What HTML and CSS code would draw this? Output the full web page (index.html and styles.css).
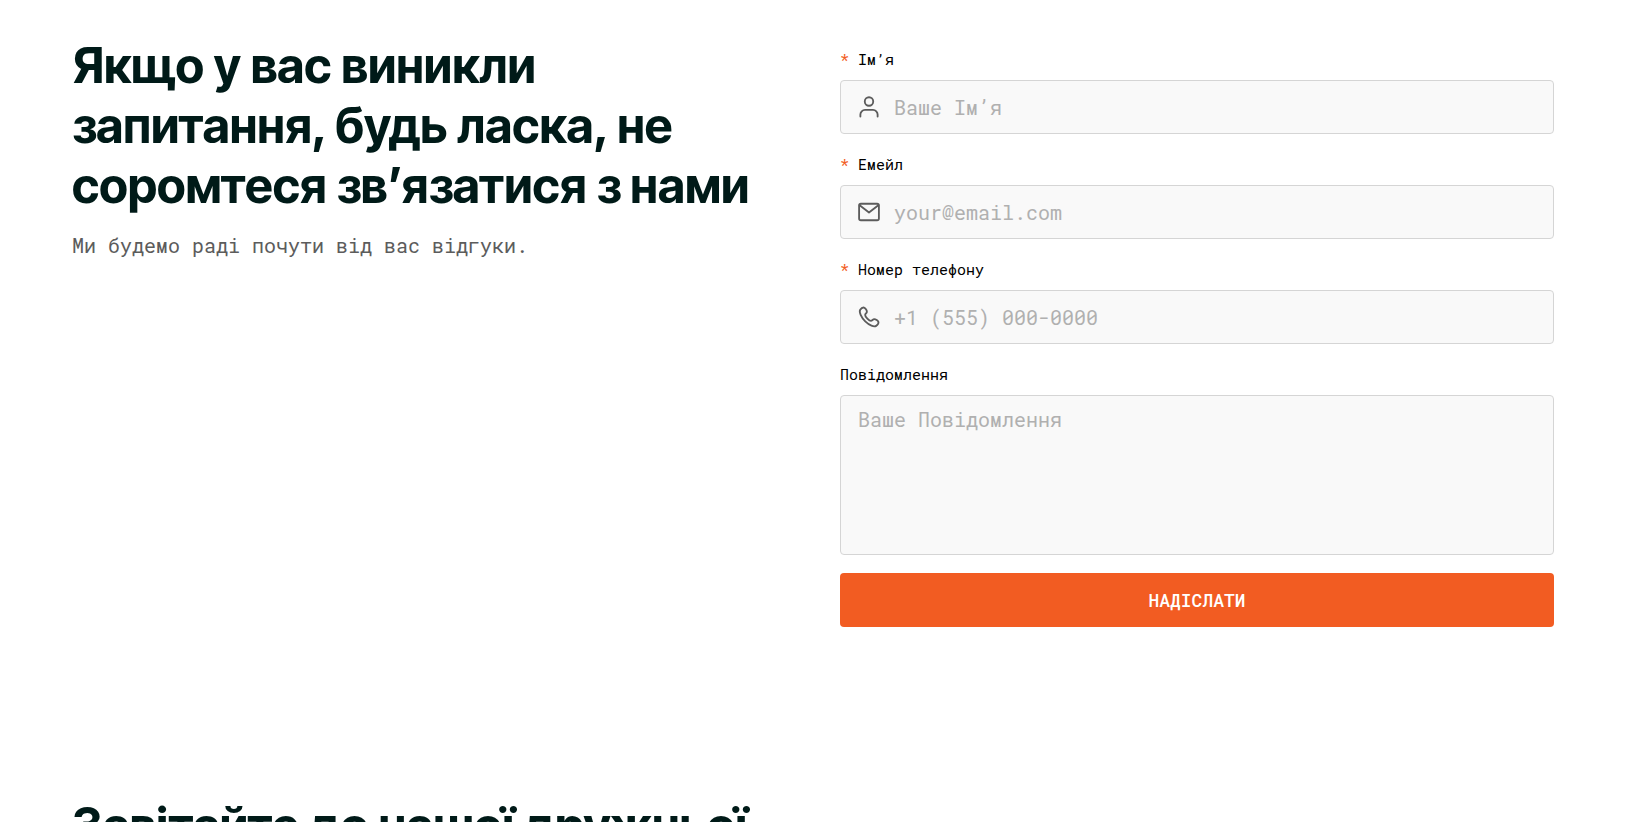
FILE: index.html
```html
<!DOCTYPE html>
<html lang="uk">
<head>
<meta charset="utf-8">
<meta name="viewport" content="width=device-width, initial-scale=1">
<title>Контакти</title>
<link rel="stylesheet" href="styles.css">
</head>
<body>
<main class="page">
  <section class="section contact">
    <div class="intro">
      <h2 class="title">Якщо у вас виникли запитання, будь ласка, не соромтеся зв’язатися з нами</h2>
      <p class="subtitle">Ми будемо раді почути від вас відгуки.</p>
    </div>
    <form class="form">
      <div class="field">
        <label class="label" for="name"><span class="required">*</span> Ім’я</label>
        <div class="control">
          <svg class="icon" viewBox="0 0 24 24" aria-hidden="true"><circle cx="12" cy="6" r="4.6"/><path d="M2.6 22.4v-2.2a5 5 0 0 1 5-5h8.8a5 5 0 0 1 5 5v2.2"/></svg>
          <input class="input" id="name" type="text" placeholder="Ваше Ім’я" required>
        </div>
      </div>
      <div class="field">
        <label class="label" for="email"><span class="required">*</span> Емейл</label>
        <div class="control">
          <svg class="icon" viewBox="0 0 24 24" aria-hidden="true"><rect x="1.2" y="3" width="21.6" height="18" rx="2"/><path d="M1.8 4.6 12 12.6 22.2 4.6"/></svg>
          <input class="input" id="email" type="email" placeholder="your@email.com" required>
        </div>
      </div>
      <div class="field">
        <label class="label" for="phone"><span class="required">*</span> Номер телефону</label>
        <div class="control">
          <svg class="icon" viewBox="0 0 24 24" aria-hidden="true"><path d="M2.4 4.2C3.4 2.6 5 1.4 6.6 1.7c1.4.4 3.1 3.1 3.1 4.6 0 1.6-1.9 2-1.9 3.5 0 1.9 4.3 6.4 6.3 6.4 1.5 0 2-1.9 3.6-1.9 1.5 0 4.3 1.8 4.6 3.2.3 1.6-.9 3.2-2.5 4.2-2.3 1.4-7.4-.5-11.9-4.9S.9 6.5 2.4 4.2Z"/></svg>
          <input class="input" id="phone" type="tel" placeholder="+1 (555) 000-0000" required>
        </div>
      </div>
      <div class="field">
        <label class="label" for="message">Повідомлення</label>
        <textarea class="input textarea" id="message" placeholder="Ваше Повідомлення"></textarea>
      </div>
      <button class="submit" type="submit">НАДІСЛАТИ</button>
    </form>
  </section>
  <section class="section">
    <h2 class="title">Завітайте до нашої дружньої</h2>
  </section>
</main>
</body>
</html>
```
FILE: styles.css
```css
* {
  box-sizing: border-box;
}

body {
  margin: 0;
  background: #fff;
  color: #000;
  font-family: "Roboto Mono", "Liberation Mono", monospace;
}

.page {
  display: flex;
  flex-direction: column;
  gap: 169px;
  padding: 36px 72px;
}

.section {
  display: grid;
  grid-template-columns: 1fr 1fr;
  column-gap: 54px;
}

.title {
  margin: 0;
  color: #001a18;
  font: 700 49px/60px "Inter Tight", Inter, sans-serif;
}

.subtitle {
  margin: 15px 0 0;
  color: #5c5c5c;
  font-size: 20px;
  line-height: 28px;
}

.form {
  display: flex;
  flex-direction: column;
  gap: 18px;
  padding-top: 11px;
}

.field {
  display: flex;
  flex-direction: column;
  gap: 9px;
}

.label {
  font-size: 15px;
  line-height: 24px;
}

.required {
  color: #f25c22;
}

.control {
  display: grid;
  align-items: center;
}

.control > * {
  grid-area: 1 / 1;
}

.icon {
  z-index: 1;
  width: 22px;
  height: 22px;
  margin-left: 18px;
  fill: none;
  stroke: #5c5c5c;
  stroke-width: 2;
  stroke-linecap: round;
  stroke-linejoin: round;
  pointer-events: none;
}

.input {
  width: 100%;
  height: 54px;
  padding: 0 18px 0 53px;
  border: 1px solid #d5d5d5;
  border-radius: 4px;
  background: #f9f9f9;
  color: #000;
  font: 400 20px/26px "Roboto Mono", "Liberation Mono", monospace;
}

.input::placeholder {
  color: #b0b0b0;
  opacity: 1;
}

.textarea {
  display: block;
  height: 160px;
  padding: 10px 17px;
  resize: none;
}

.submit {
  height: 54px;
  border: 0;
  border-radius: 4px;
  background: #f25c22;
  color: #fff;
  font: 500 18px/24px "Roboto Mono", "Liberation Mono", monospace;
  cursor: pointer;
}

@media (max-width: 800px) {
  .section {
    grid-template-columns: 1fr;
  }
}
```
